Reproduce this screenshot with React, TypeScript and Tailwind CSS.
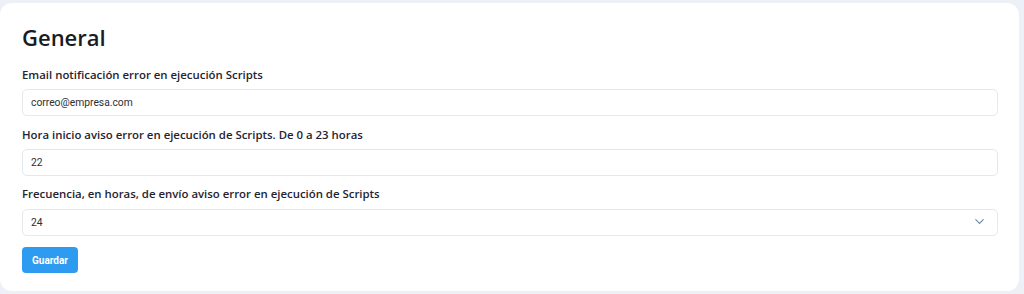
import { ChevronDown } from "lucide-react";

const Field = ({ label, children }: { label: string; children: React.ReactNode }) => (
  <div className="flex flex-col">
    <label className="mb-[5px] text-[11.4px] font-semibold leading-[18px] text-[#1f2430] font-['Open_Sans',sans-serif]">
      {label}
    </label>
    {children}
  </div>
);

export default function App() {
  return (
    <div className="h-[294px] w-[1024px] bg-[#eef0f8] pr-[5px] pt-[3px] pb-[3px]">
      <div className="h-full rounded-[12px] bg-white pl-[22px] pr-[21px] pt-[18px]">
        <h1 className="mb-[13px] text-[22px] font-semibold leading-[32px] text-[#181c25] font-['Open_Sans',sans-serif]">
          General
        </h1>
        <div className="flex flex-col gap-[9.5px]">
          <Field label="Email notificación error en ejecución Scripts">
            <input
              defaultValue="correo@empresa.com"
              className="h-[27px] w-full rounded-[5px] border border-[#e6e8ec] px-[8px] text-[10.3px] text-[#2b2f36] outline-none font-['Roboto',sans-serif]"
            />
          </Field>
          <Field label="Hora inicio aviso error en ejecución de Scripts. De 0 a 23 horas">
            <input
              defaultValue="22"
              className="h-[27px] w-full rounded-[5px] border border-[#e2e8f0] px-[8px] text-[10.3px] text-[#2b2f36] outline-none font-['Roboto',sans-serif]"
            />
          </Field>
          <Field label="Frecuencia, en horas, de envío aviso error en ejecución de Scripts">
            <div className="relative">
              <select
                defaultValue="24"
                className="h-[27px] w-full appearance-none rounded-[5px] border border-[#e6e8ec] bg-white px-[8px] text-[10.3px] text-[#2b2f36] outline-none font-['Roboto',sans-serif]"
              >
                <option value="1">1</option>
                <option value="12">12</option>
                <option value="24">24</option>
              </select>
              <ChevronDown
                className="pointer-events-none absolute right-[11px] top-[6px] h-[15px] w-[15px] text-[#6b84a3]"
                strokeWidth={1.7}
              />
            </div>
          </Field>
        </div>
        <button className="mt-[11px] h-[26px] rounded-[4px] bg-[#2d9bef] px-[10px] text-[10px] font-bold text-white font-['Roboto',sans-serif]">
          Guardar
        </button>
      </div>
    </div>
  );
}
